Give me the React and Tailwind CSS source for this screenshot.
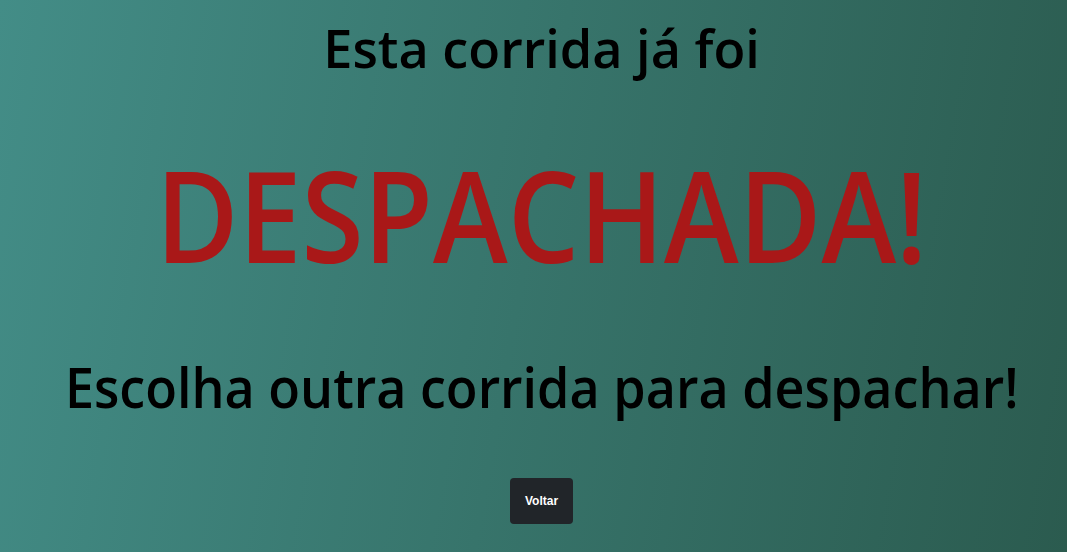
import React from "react";

export default function App() {
  return (
    <div className="min-h-screen w-full bg-linear-100 from-[#438d87] to-[#2b5b4f] flex flex-col items-center pl-4 font-['Open_Sans',sans-serif]">
      <h1 className="mt-[21px] text-[53px] leading-none font-semibold text-black scale-x-[0.985]">
        Esta corrida já foi
      </h1>
      <h2 className="mt-[77px] text-[126px] leading-none font-semibold text-[#a91818] scale-x-[0.896]">
        DESPACHADA!
      </h2>
      <h3 className="mt-[81px] text-[56px] leading-none font-semibold text-black scale-x-[0.93]">
        Escolha outra corrida para despachar!
      </h3>
      <button className="mt-[64px] h-[46px] w-[63px] rounded bg-[#212529] text-white text-[12px] font-bold font-['Liberation_Sans',sans-serif]">
        Voltar
      </button>
    </div>
  );
}
